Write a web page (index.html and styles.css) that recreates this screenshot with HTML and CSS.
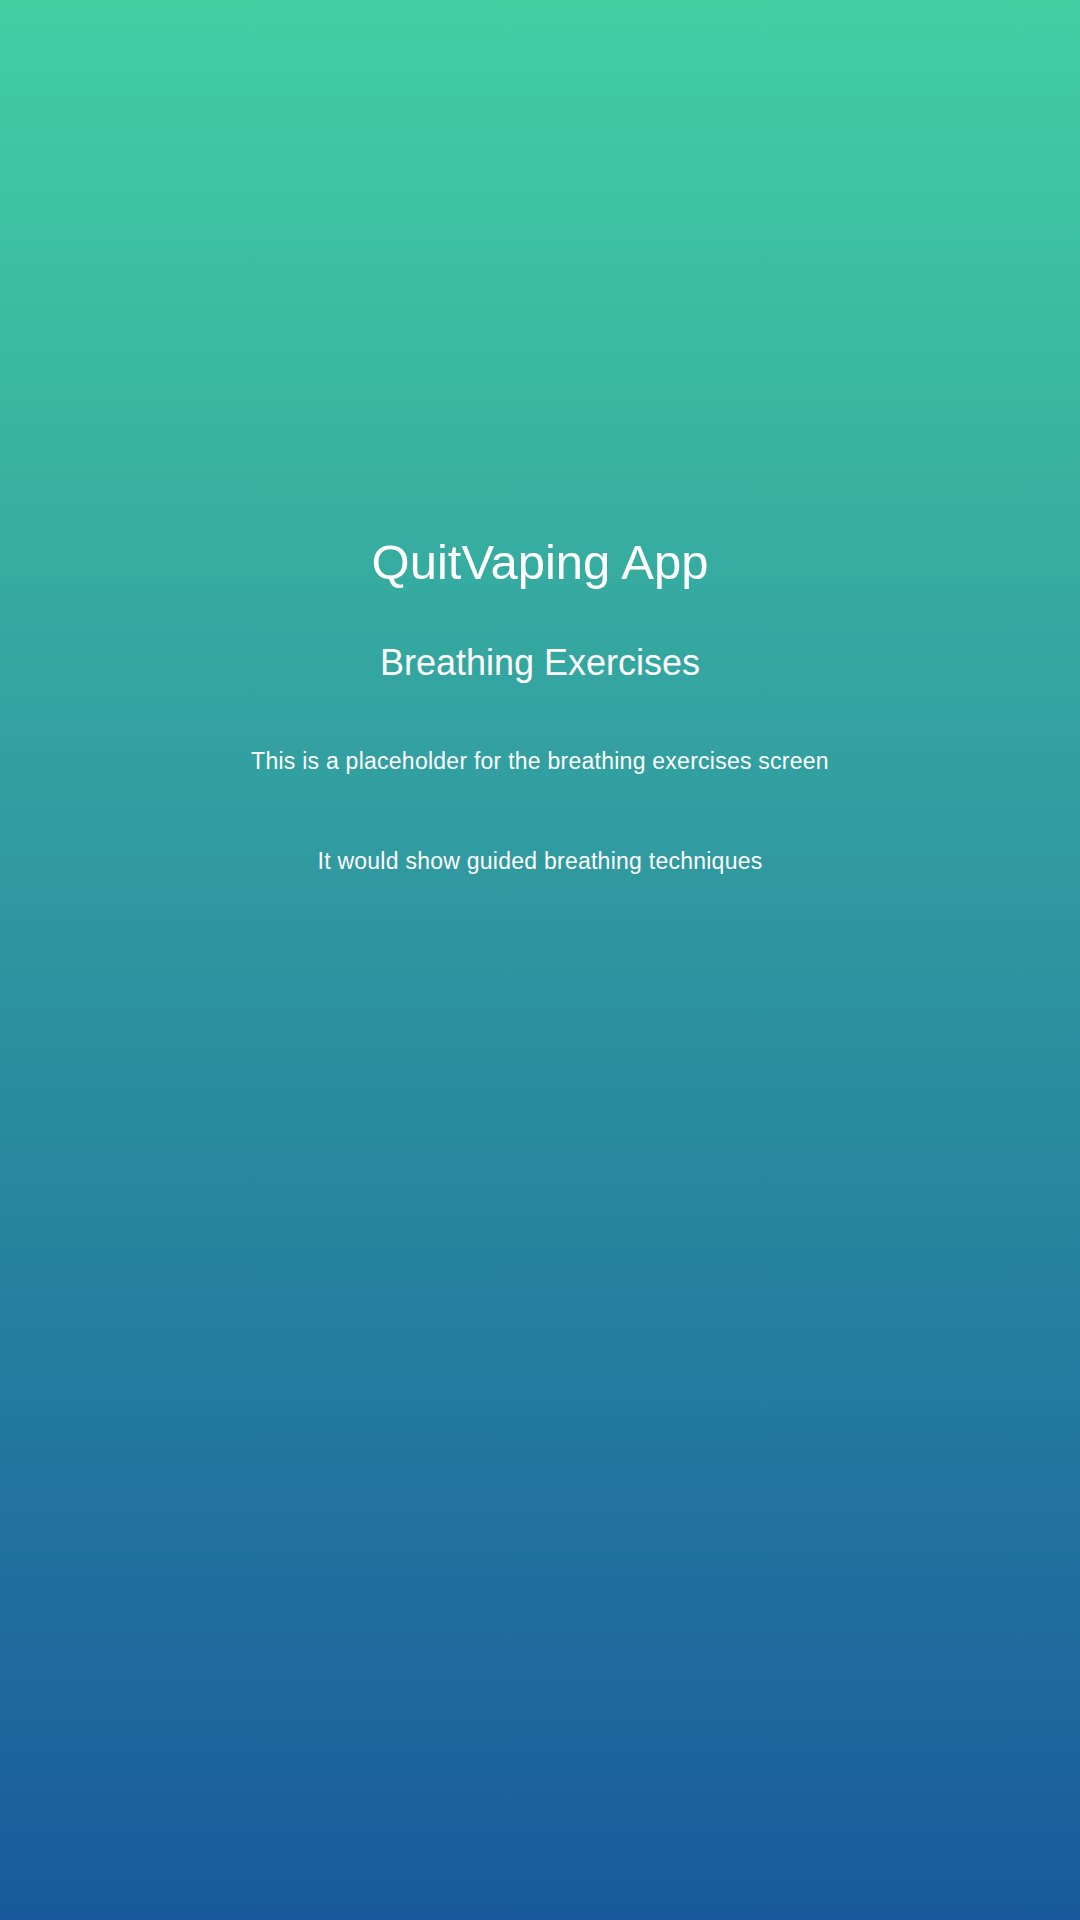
FILE: index.html
```html
<!DOCTYPE html>
<html lang="en">
<head>
<meta charset="utf-8">
<title>QuitVaping App</title>
<link rel="stylesheet" href="styles.css">
</head>
<body>
<main class="screen">
  <h1 class="app-title">QuitVaping App</h1>
  <h2 class="screen-title">Breathing Exercises</h2>
  <p class="note note-first">This is a placeholder for the breathing exercises screen</p>
  <p class="note note-second">It would show guided breathing techniques</p>
</main>
</body>
</html>
```
FILE: styles.css
```css
html, body {
  margin: 0;
  padding: 0;
}
body {
  width: 1080px;
  height: 1920px;
  background: linear-gradient(to bottom, #43cea2 0%, #185a9d 100%);
  font-family: "Liberation Sans", Arial, sans-serif;
  color: #ffffff;
  overflow: hidden;
}
.screen {
  display: flex;
  flex-direction: column;
  align-items: center;
  padding-top: 534px;
  text-align: center;
}
.app-title {
  margin: 0;
  font-weight: 400;
  font-size: 49px;
  line-height: 56px;
}
.screen-title {
  margin: 52px 0 0;
  font-weight: 400;
  font-size: 36px;
  line-height: 42px;
}
.note {
  margin: 0;
  font-size: 23px;
  line-height: 28px;
  letter-spacing: 0.25px;
}
.note-first {
  margin-top: 63px;
}
.note-second {
  margin-top: 72px;
}
```
